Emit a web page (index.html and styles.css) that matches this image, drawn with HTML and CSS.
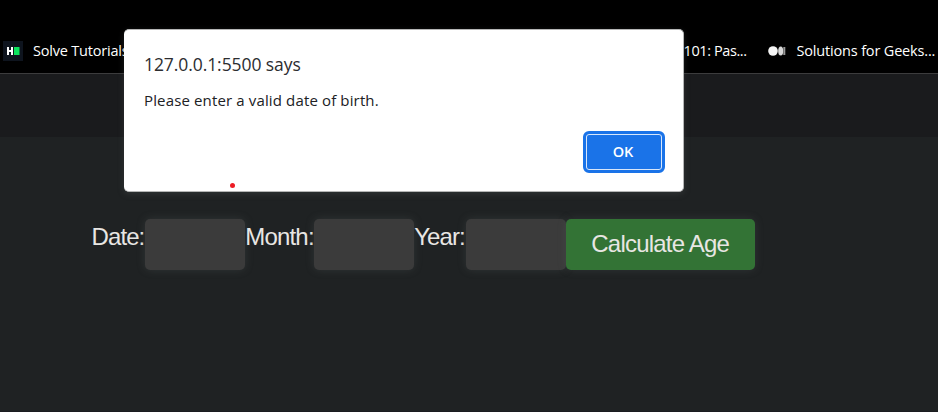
FILE: index.html
```html
<!DOCTYPE html>
<html lang="en">
<head>
<meta charset="utf-8">
<title>Age Calculator</title>
<link rel="stylesheet" href="styles.css">
</head>
<body>
<nav class="bookmarks">
  <svg class="icon-hr" width="20" height="20" viewBox="0 0 20 20"><rect width="20" height="20" fill="#0e141e"/><path d="M4 6h2v3h2V6h2v8H8v-3H6v3H4z" fill="#fff"/><path d="M11 6h5.5v8H11z" fill="#0be35d"/></svg>
  <span class="bookmark tutorials">Solve Tutorials</span>
  <span class="bookmark course">101: Pas...</span>
  <svg class="icon-medium" width="18" height="10" viewBox="0 0 18 10"><circle cx="5" cy="5" r="4.8" fill="#f5f5f5"/><ellipse cx="12.7" cy="5" rx="2.5" ry="4.5" fill="#d8d8d8"/><path d="M16.3 1v8" stroke="#999" stroke-width="2"/></svg>
  <span class="bookmark solutions">Solutions for Geeks...</span>
</nav>
<header class="page-header"></header>
<main class="page">
  <form class="form">
    <label class="label date" for="d">Date:</label><input class="field" id="d">
    <label class="label month" for="m">Month:</label><input class="field" id="m">
    <label class="label year" for="y">Year:</label><input class="field" id="y">
    <button class="calculate" type="button">Calculate Age</button>
  </form>
</main>
<section class="dialog" role="alertdialog">
  <h1 class="title">127.0.0.1:5500 says</h1>
  <p class="message">Please enter a valid date of birth.</p>
  <button class="ok" type="button">OK</button>
  <i class="dot"></i>
</section>
</body>
</html>
```
FILE: styles.css
```css
* { box-sizing: border-box; }
body {
  margin: 0;
  height: 412px;
  overflow: hidden;
  display: flex;
  flex-direction: column;
  background: #1f2223;
  font-family: "Open Sans", "Noto Sans", sans-serif;
}
.bookmarks {
  height: 74px;
  flex: none;
  display: flex;
  align-items: center;
  padding: 28px 0 0 3px;
  background: #000;
  border-bottom: 1px solid #3c3c3d;
  color: #fff;
  font-size: 14.5px;
  line-height: 20px;
  white-space: nowrap;
}
.bookmark { flex: none; letter-spacing: -0.4px; }
.icon-hr, .icon-medium { flex: none; }
.tutorials { width: 650.5px; margin-left: 10px; letter-spacing: -0.2px; }
.course { width: 84.5px; }
.solutions { margin-left: 10.5px; letter-spacing: -0.17px; }
.page-header { height: 63px; flex: none; background: #1a1b1d; }
.page { flex: 1; padding: 82px 0 0 91px; border-bottom: 1px solid #1b1c20; }
.form { display: flex; height: 51px; }
.label, .calculate {
  font-family: "Liberation Sans", Arial, sans-serif;
  font-size: 24px;
  letter-spacing: -0.8px;
  color: #e8e6e3;
  white-space: nowrap;
}
.label { flex: none; line-height: 36px; }
.date { width: 53.7px; padding-left: 0.5px; letter-spacing: -0.9px; }
.month { width: 68.5px; }
.year { width: 51.5px; letter-spacing: -0.9px; }
.field {
  width: 100.5px;
  flex: none;
  border: 0;
  border-radius: 5px;
  background: #3b3b3b;
  box-shadow: 0 0 8px rgba(90, 95, 96, .3);
}
.calculate {
  width: 189px;
  flex: none;
  padding: 0 1px 2px 0;
  border: 0;
  border-radius: 5px;
  background: #337335;
  box-shadow: 0 0 8px rgba(90, 95, 96, .3);
}
.dialog {
  position: absolute;
  left: 124px;
  top: 29px;
  width: 560px;
  height: 163px;
  display: flex;
  flex-direction: column;
  padding: 22px 19px 19px 20px;
  border: 1px solid #b5b6b6;
  border-left: 0;
  border-radius: 5px;
  background: #fff;
  box-shadow: 0 2px 6px rgba(80, 85, 86, .35);
  color: #202124;
}
.title, .message { margin: 0; font-weight: 400; white-space: nowrap; }
.title { font-size: 17.5px; line-height: 24px; letter-spacing: -0.08px; color: #2c2d30; }
.message { margin-top: 14px; font-size: 15px; line-height: 20px; letter-spacing: 0.14px; }
.ok {
  align-self: flex-end;
  margin: 21px -1px 0 0;
  width: 82px;
  height: 42px;
  flex: none;
  padding: 1px 2px 0 0;
  border: 3px solid #1a73e8;
  border-radius: 6px;
  background: #1a73e8;
  box-shadow: inset 0 0 0 1px #d7e6fb;
  color: #fff;
  font: 600 14.5px/1 "Open Sans", sans-serif;
}
.dot {
  position: absolute;
  left: 105.5px;
  top: 152.5px;
  width: 5px;
  height: 5px;
  border-radius: 50%;
  background: #ed1c24;
}
```
